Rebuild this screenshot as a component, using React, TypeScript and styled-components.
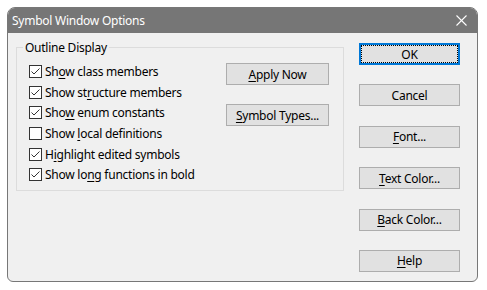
import React from "react";
import styled, { createGlobalStyle } from "styled-components";

const Global = createGlobalStyle`
  html, body { margin: 0; padding: 0; background: #ffffff; }
  body { font-family: "Noto Sans", "Open Sans", sans-serif; font-size: 12px; color: #000; letter-spacing: -0.25px; }
`;

const Window = styled.div`
  margin: 7px 0 0 7px;
  width: 471px;
  height: 275px;
  box-sizing: border-box;
  border: 1px solid #777777;
  border-radius: 8px 8px 6px 6px;
  background: #f0f0f0;
  overflow: hidden;
  display: flex;
  flex-direction: column;
`;

const TitleBar = styled.div`
  height: 25px;
  flex: none;
  background: #767676;
  color: #ffffff;
  display: flex;
  align-items: center;
  justify-content: space-between;
  padding: 0 10px 0 4px;
  font-size: 12px;
`;

const Title = styled.span`
  line-height: 15px;
`;

const CloseIcon = styled.svg`
  display: block;
`;

const Body = styled.div`
  flex: 1;
  display: flex;
  align-items: flex-start;
  padding: 10px 0 0 8px;
  gap: 15px;
`;

const GroupBox = styled.fieldset`
  margin: -3px 0 0 0;
  width: 328px;
  height: 151px;
  box-sizing: border-box;
  border: 1px solid #dcdcdc;
  padding: 6px 14px 0 12px;
  display: flex;
  justify-content: space-between;
  align-items: flex-start;
`;

const Legend = styled.legend`
  margin-left: -6px;
  padding: 0 2px;
  line-height: 15px;
  font-size: 12px;
`;

const CheckList = styled.div`
  display: flex;
  flex-direction: column;
`;

const CheckRow = styled.label`
  height: 20.7px;
  display: flex;
  align-items: center;
  white-space: nowrap;
`;

const Box = styled.span`
  width: 13px;
  height: 13px;
  box-sizing: border-box;
  border: 1px solid #333333;
  background: #ffffff;
  margin-right: 3px;
  display: flex;
  align-items: center;
  justify-content: center;
  flex: none;
`;

const Mnemonic = styled.u`
  text-decoration: underline;
  text-underline-offset: 2px;
`;

const SideButtons = styled.div`
  display: flex;
  flex-direction: column;
  gap: 19px;
  margin-top: 2px;
`;

const Button = styled.button<{ $width: number; $default?: boolean }>`
  width: ${(p) => p.$width}px;
  height: 22px;
  box-sizing: border-box;
  margin: 0;
  padding: 0;
  background: #e1e1e1;
  border: ${(p) => (p.$default ? "2px solid #0078d7" : "1px solid #adadad")};
  color: #000;
  font-family: "Noto Sans", "Open Sans", sans-serif;
  font-size: 12px;
  letter-spacing: -0.25px;
  line-height: 15px;
  outline: ${(p) => (p.$default ? "1px dotted #000" : "none")};
  outline-offset: -3px;
  cursor: default;
`;

const RightColumn = styled.div`
  display: flex;
  flex-direction: column;
  gap: 19.4px;
`;

const Check = () => (
  <svg width="11" height="11" viewBox="0 0 11 11">
    <polyline points="1.5,5.5 4,8 9.5,2.5" fill="none" stroke="#333" strokeWidth="1" />
  </svg>
);

type Item = { pre: string; key: string; post: string; checked: boolean };

const items: Item[] = [
  { pre: "Sh", key: "o", post: "w class members", checked: true },
  { pre: "Show st", key: "r", post: "ucture members", checked: true },
  { pre: "Sho", key: "w", post: " enum constants", checked: true },
  { pre: "Show ", key: "l", post: "ocal definitions", checked: false },
  { pre: "H", key: "i", post: "ghlight edited symbols", checked: true },
  { pre: "Show lo", key: "n", post: "g functions in bold", checked: true },
];

const Label = ({ pre, k, post }: { pre: string; k: string; post: string }) => (
  <span>
    {pre}
    <Mnemonic>{k}</Mnemonic>
    {post}
  </span>
);

export default function App() {
  return (
    <>
      <Global />
      <Window>
        <TitleBar>
          <Title>Symbol Window Options</Title>
          <CloseIcon width="11" height="11" viewBox="0 0 11 11">
            <line x1="0.5" y1="0.5" x2="10.5" y2="10.5" stroke="#fff" strokeWidth="1.1" />
            <line x1="10.5" y1="0.5" x2="0.5" y2="10.5" stroke="#fff" strokeWidth="1.1" />
          </CloseIcon>
        </TitleBar>
        <Body>
          <GroupBox>
            <Legend>Outline Display</Legend>
            <CheckList>
              {items.map((it) => (
                <CheckRow key={it.pre + it.post}>
                  <Box>{it.checked && <Check />}</Box>
                  <Label pre={it.pre} k={it.key} post={it.post} />
                </CheckRow>
              ))}
            </CheckList>
            <SideButtons>
              <Button $width={103}>
                <Label pre="" k="A" post="pply Now" />
              </Button>
              <Button $width={103}>
                <Label pre="" k="S" post="ymbol Types..." />
              </Button>
            </SideButtons>
          </GroupBox>
          <RightColumn>
            <Button $width={101} $default>
              OK
            </Button>
            <Button $width={101}>Cancel</Button>
            <Button $width={101}>
              <Label pre="" k="F" post="ont..." />
            </Button>
            <Button $width={101}>
              <Label pre="" k="T" post="ext Color..." />
            </Button>
            <Button $width={101}>
              <Label pre="" k="B" post="ack Color..." />
            </Button>
            <Button $width={101}>
              <Label pre="" k="H" post="elp" />
            </Button>
          </RightColumn>
        </Body>
      </Window>
    </>
  );
}
